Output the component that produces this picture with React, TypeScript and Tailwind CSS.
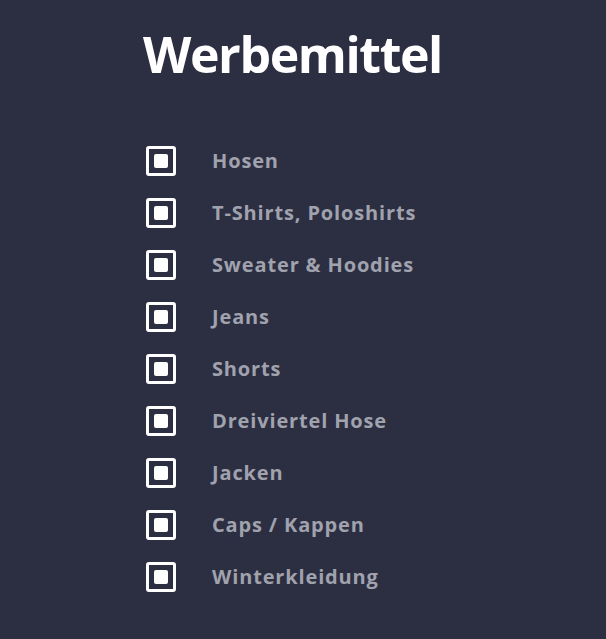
const items = [
  "Hosen",
  "T-Shirts, Poloshirts",
  "Sweater & Hoodies",
  "Jeans",
  "Shorts",
  "Dreiviertel Hose",
  "Jacken",
  "Caps / Kappen",
  "Winterkleidung",
];

export default function App() {
  return (
    <div className="min-h-[639px] bg-[#2c2e42] pl-[143px] pt-[24px] font-['Open_Sans',sans-serif]">
      <h1 className="text-[50px] font-bold leading-[60px] tracking-[-1.4px] text-white">Werbemittel</h1>
      <ul className="mt-[62px] flex flex-col gap-[22px]">
        {items.map((item) => (
          <li key={item} className="flex h-[30px] items-center">
            <span className="ml-[3px] flex h-[30px] w-[30px] items-center justify-center rounded-[3px] border-[3px] border-white">
              <span className="h-[14px] w-[14px] rounded-[2px] bg-white" />
            </span>
            <span className="ml-[36px] text-[20px] font-bold tracking-[0.85px] text-[#a0a2ad]">{item}</span>
          </li>
        ))}
      </ul>
    </div>
  );
}
